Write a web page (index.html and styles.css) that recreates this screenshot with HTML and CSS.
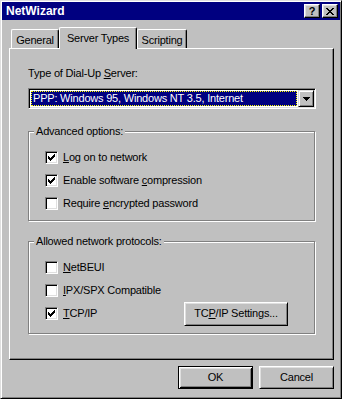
FILE: index.html
```html
<!DOCTYPE html>
<html lang="en">
<head>
	<meta charset="UTF-8">
	<title>NetWizard</title>
	<link rel="stylesheet" href="styles.css">
</head>
<body>
	<div class="window">
		<div class="titlebar">
			<span class="title">NetWizard</span>
			<div class="caption-buttons">
				<span class="cap-btn cap-help">?</span>
				<span class="cap-btn">
					<svg width="8" height="7" viewBox="0 0 8 7"><path d="M0 0h2v1h-2zM6 0h2v1h-2zM1 1h2v1h-2zM5 1h2v1h-2zM2 2h4v1h-4zM3 3h2v1h-2zM2 4h4v1h-4zM1 5h2v1h-2zM5 5h2v1h-2zM0 6h2v1h-2zM6 6h2v1h-2z" fill="#000"/></svg>
				</span>
			</div>
		</div>

		<div class="content">
			<div class="tabs">
				<div class="tab tab-general">General</div>
				<div class="tab tab-server active">Server Types</div>
				<div class="tab tab-scripting">Scripting</div>
			</div>

			<div class="panel">
				<div class="field-label">Type of Dial-Up <u>S</u>erver:</div>
				<div class="combo">
					<div class="combo-value">PPP: Windows 95, Windows NT 3.5, Internet</div>
					<div class="combo-button">
						<svg width="7" height="4" viewBox="0 0 7 4"><path d="M0 0h7v1h-7zM1 1h5v1h-5zM2 2h3v1h-3zM3 3h1v1h-1z" fill="#000"/></svg>
					</div>
				</div>

				<div class="group group-advanced">
					<div class="group-title">Advanced options:</div>
					<div class="rows">
						<div class="row">
							<span class="checkbox"><svg width="7" height="7" viewBox="0 0 7 7"><path d="M0 2h1v3h-1zM1 3h1v3h-1zM2 4h1v3h-1zM3 3h1v3h-1zM4 2h1v3h-1zM5 1h1v3h-1zM6 0h1v3h-1z" fill="#000"/></svg></span>
							<span><u>L</u>og on to network</span>
						</div>
						<div class="row">
							<span class="checkbox"><svg width="7" height="7" viewBox="0 0 7 7"><path d="M0 2h1v3h-1zM1 3h1v3h-1zM2 4h1v3h-1zM3 3h1v3h-1zM4 2h1v3h-1zM5 1h1v3h-1zM6 0h1v3h-1z" fill="#000"/></svg></span>
							<span>Enable software <u>c</u>ompression</span>
						</div>
						<div class="row">
							<span class="checkbox"></span>
							<span>Require <u>e</u>ncrypted password</span>
						</div>
					</div>
				</div>

				<div class="group group-protocols">
					<div class="group-title">Allowed network protocols:</div>
					<div class="rows">
						<div class="row">
							<span class="checkbox"></span>
							<span><u>N</u>etBEUI</span>
						</div>
						<div class="row">
							<span class="checkbox"></span>
							<span><u>I</u>PX/SPX Compatible</span>
						</div>
						<div class="row">
							<span class="checkbox"><svg width="7" height="7" viewBox="0 0 7 7"><path d="M0 2h1v3h-1zM1 3h1v3h-1zM2 4h1v3h-1zM3 3h1v3h-1zM4 2h1v3h-1zM5 1h1v3h-1zM6 0h1v3h-1z" fill="#000"/></svg></span>
							<span><u>T</u>CP/IP</span>
							<button class="btn btn-settings">TC<u>P</u>/IP Settings...</button>
						</div>
					</div>
				</div>
			</div>

			<div class="dialog-buttons">
				<button class="btn btn-default">OK</button>
				<button class="btn">Cancel</button>
			</div>
		</div>
	</div>
</body>
</html>
```

FILE: styles.css
```css
body {
	margin: 0;
	font-family: "Liberation Sans", Arial, sans-serif;
	font-size: 11px;
	letter-spacing: -0.2px;
	color: #000;
}

u {
	text-decoration: underline;
}

.window {
	width: 342px;
	height: 399px;
	box-sizing: border-box;
	background: #c0c0c0;
	border: 1px solid;
	border-color: #dfdfdf #000 #000 #dfdfdf;
	box-shadow: inset 1px 1px #fff, inset -1px -1px #808080;
	padding: 1px;
}

/* title bar */
.titlebar {
	height: 18px;
	background: #000080;
	display: flex;
	align-items: center;
	justify-content: space-between;
	padding: 0 2px 0 4px;
}
.title {
	color: #fff;
	font-weight: bold;
	font-size: 12px;
	letter-spacing: 0;
	line-height: 18px;
}
.caption-buttons {
	display: flex;
	gap: 2px;
}
.cap-btn {
	width: 16px;
	height: 14px;
	box-sizing: border-box;
	background: #c0c0c0;
	border: 1px solid;
	border-color: #fff #000 #000 #fff;
	box-shadow: inset -1px -1px #808080, inset 1px 1px #dfdfdf;
	display: flex;
	align-items: center;
	justify-content: center;
}
.cap-help {
	font-weight: bold;
	font-size: 11px;
	line-height: 12px;
	letter-spacing: 0;
}

.content {
	padding: 7px 6px 0 7px;
}

/* tabs */
.tabs {
	display: flex;
	align-items: flex-end;
	margin-left: 2px;
}
.tab {
	height: 19px;
	box-sizing: border-box;
	padding-top: 4px;
	line-height: 13px;
	text-align: center;
	border-top: 1px solid #fff;
	border-left: 1px solid #fff;
	border-right: 1px solid #000;
	box-shadow: inset -1px 0 #808080;
	border-radius: 2px 2px 0 0;
	background: #c0c0c0;
}
.tab-general { width: 48px; }
.tab-server { width: 78px; }
.tab-scripting { width: 50px; }
.tab.active {
	height: 22px;
	margin-bottom: -1px;
	position: relative;
	z-index: 1;
}

/* panel */
.panel {
	height: 312px;
	box-sizing: border-box;
	border: 1px solid;
	border-color: #fff #000 #000 #fff;
	box-shadow: inset -1px -1px #808080;
	padding: 18px 0 0 18px;
}
.field-label {
	line-height: 13px;
}

.combo {
	display: flex;
	width: 288px;
	height: 21px;
	box-sizing: border-box;
	margin-top: 8px;
	padding: 1px;
	background: #fff;
	border: 1px solid;
	border-color: #808080 #fff #fff #808080;
	box-shadow: inset 1px 1px #000, inset -1px -1px #dfdfdf;
}
.combo-value {
	flex: 1;
	margin: 1px;
	padding-left: 1px;
	background: #000080;
	color: #fff;
	border: 1px dotted #ffff00;
	line-height: 13px;
}
.combo-button {
	width: 16px;
	height: 17px;
	box-sizing: border-box;
	background: #c0c0c0;
	border: 1px solid;
	border-color: #dfdfdf #000 #000 #dfdfdf;
	box-shadow: inset 1px 1px #fff, inset -1px -1px #808080;
	display: flex;
	align-items: center;
	justify-content: center;
}

/* group boxes */
.group {
	width: 287px;
	box-sizing: border-box;
	border: 1px solid #808080;
	box-shadow: inset 1px 1px #fff, 1px 1px #fff;
}
.group-advanced {
	margin-top: 22px;
	padding-bottom: 5px;
}
.group-protocols {
	margin-top: 20px;
	padding-bottom: 8px;
}
.group-title {
	width: fit-content;
	margin: -7px 0 0 5px;
	padding: 0 2px;
	background: #c0c0c0;
	line-height: 13px;
}
.rows {
	margin-top: 8px;
	padding-left: 16px;
}
.row {
	height: 23px;
	display: flex;
	align-items: center;
	gap: 5px;
	line-height: 13px;
}

.checkbox {
	width: 13px;
	height: 13px;
	box-sizing: border-box;
	background: #fff;
	border: 1px solid;
	border-color: #808080 #fff #fff #808080;
	box-shadow: inset 1px 1px #000, inset -1px -1px #dfdfdf;
	display: flex;
	align-items: center;
	justify-content: center;
}

/* buttons */
.btn {
	font: inherit;
	letter-spacing: inherit;
	color: #000;
	width: 75px;
	height: 23px;
	box-sizing: border-box;
	padding: 0;
	background: #c0c0c0;
	border: 1px solid;
	border-color: #fff #000 #000 #fff;
	box-shadow: inset 1px 1px #dfdfdf, inset -1px -1px #808080;
	line-height: 13px;
}
.btn-default {
	border-color: #000;
	box-shadow: inset 1px 1px #fff, inset -1px -1px #000, inset 2px 2px #dfdfdf, inset -2px -2px #808080;
}
.btn-settings {
	width: 104px;
	height: 24px;
	margin-left: auto;
	margin-right: 26px;
}

.dialog-buttons {
	display: flex;
	justify-content: flex-end;
	gap: 6px;
	margin-top: 6px;
}
```
